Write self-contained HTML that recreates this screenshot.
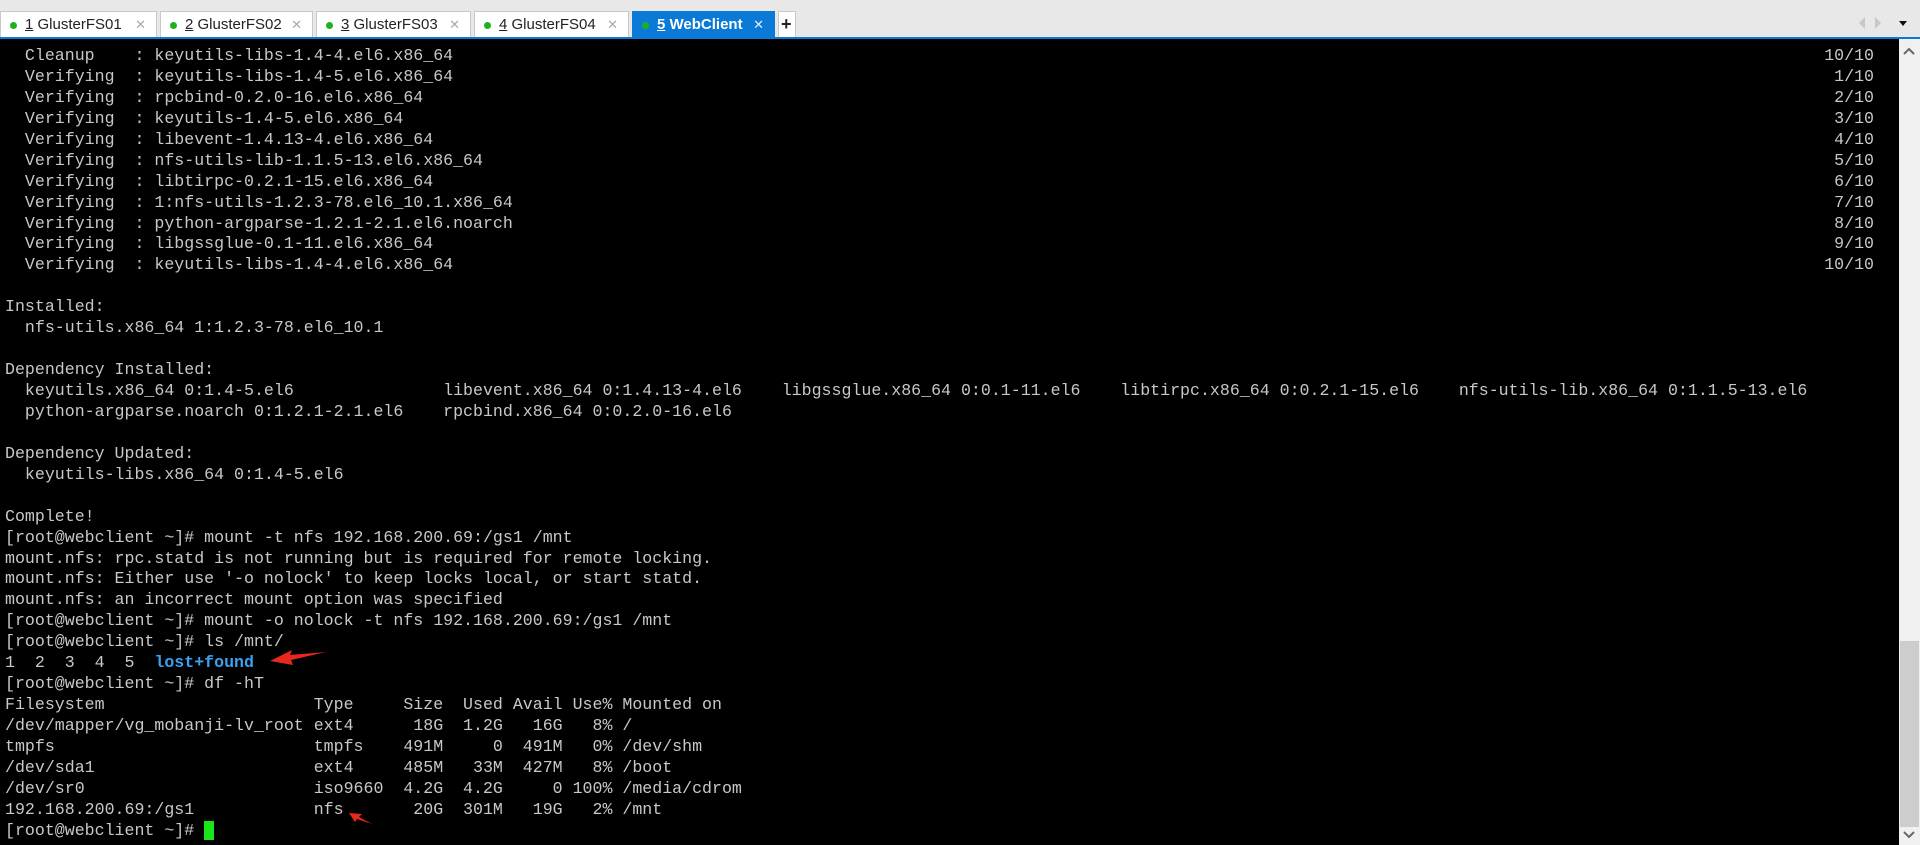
<!DOCTYPE html>
<html><head><meta charset="utf-8"><style>
html,body{margin:0;padding:0;width:1920px;height:845px;overflow:hidden;background:#000;}
#bar{position:absolute;left:0;top:0;width:1920px;height:37px;background:#e8e8e8;}
.tab{position:absolute;top:11px;height:26px;background:#fff;border:1px solid #c8c8c8;border-bottom:none;box-sizing:border-box;font-family:"Liberation Sans",sans-serif;font-size:15px;line-height:25px;color:#222;}
.tab .dot{position:absolute;left:9px;top:10px;width:7px;height:7px;border-radius:50%;background:#1db21d;}
.tab .t{position:absolute;left:24px;}
.tab .x{position:absolute;right:10px;color:#aaa;font-size:13px;}
.tab.act{background:#0a7ad6;border-color:#0a7ad6;color:#fff;font-weight:bold;}
.tab.act .x{color:#e0eefa;font-weight:normal;}
#blue{position:absolute;left:0;top:37px;width:1920px;height:2px;background:#0a7ad6;}
#term{position:absolute;left:5px;top:46px;margin:0;font-family:"Liberation Mono",monospace;font-size:16.6px;line-height:20.94px;color:#c8c8c8;white-space:pre;}
#sb{position:absolute;left:1899px;top:39px;width:21px;height:806px;background:#f0f0f0;}
#thumb{position:absolute;left:1900px;top:641px;width:19px;height:186px;background:#cdcdcd;}
.b{color:#3aa0f0;font-weight:bold;}
</style></head><body>
<div id="bar">
<div class="tab" style="left:0;width:157px"><span class="dot"></span><span class="t"><u>1</u> GlusterFS01</span><span class="x">✕</span></div>
<div class="tab" style="left:160px;width:153px"><span class="dot"></span><span class="t"><u>2</u> GlusterFS02</span><span class="x">✕</span></div>
<div class="tab" style="left:316px;width:155px"><span class="dot"></span><span class="t"><u>3</u> GlusterFS03</span><span class="x">✕</span></div>
<div class="tab" style="left:474px;width:155px"><span class="dot"></span><span class="t"><u>4</u> GlusterFS04</span><span class="x">✕</span></div>
<div class="tab act" style="left:632px;width:143px"><span class="dot"></span><span class="t"><u>5</u> WebClient</span><span class="x">✕</span></div>
<div class="tab" style="left:778px;width:18px;font-weight:bold;font-size:18px;text-align:center;line-height:24px"><span style="position:absolute;left:2px">+</span></div>
<svg style="position:absolute;left:1855px;top:16px" width="60" height="14"><path d="M10 1 L4 7 L10 13Z" fill="#c8c8c8"/><path d="M20 1 L26 7 L20 13Z" fill="#c8c8c8"/><path d="M44 5 L52 5 L48 10Z" fill="#111"/></svg>
</div>
<div id="blue"></div>
<pre id="term">  Cleanup    : keyutils-libs-1.4-4.el6.x86_64
  Verifying  : keyutils-libs-1.4-5.el6.x86_64
  Verifying  : rpcbind-0.2.0-16.el6.x86_64
  Verifying  : keyutils-1.4-5.el6.x86_64
  Verifying  : libevent-1.4.13-4.el6.x86_64
  Verifying  : nfs-utils-lib-1.1.5-13.el6.x86_64
  Verifying  : libtirpc-0.2.1-15.el6.x86_64
  Verifying  : 1:nfs-utils-1.2.3-78.el6_10.1.x86_64
  Verifying  : python-argparse-1.2.1-2.1.el6.noarch
  Verifying  : libgssglue-0.1-11.el6.x86_64
  Verifying  : keyutils-libs-1.4-4.el6.x86_64

Installed:
  nfs-utils.x86_64 1:1.2.3-78.el6_10.1

Dependency Installed:
  keyutils.x86_64 0:1.4-5.el6               libevent.x86_64 0:1.4.13-4.el6    libgssglue.x86_64 0:0.1-11.el6    libtirpc.x86_64 0:0.2.1-15.el6    nfs-utils-lib.x86_64 0:1.1.5-13.el6
  python-argparse.noarch 0:1.2.1-2.1.el6    rpcbind.x86_64 0:0.2.0-16.el6

Dependency Updated:
  keyutils-libs.x86_64 0:1.4-5.el6

Complete!
[root@webclient ~]# mount -t nfs 192.168.200.69:/gs1 /mnt
mount.nfs: rpc.statd is not running but is required for remote locking.
mount.nfs: Either use '-o nolock' to keep locks local, or start statd.
mount.nfs: an incorrect mount option was specified
[root@webclient ~]# mount -o nolock -t nfs 192.168.200.69:/gs1 /mnt
[root@webclient ~]# ls /mnt/
1  2  3  4  5  <span class="b">lost+found</span>
[root@webclient ~]# df -hT
Filesystem                     Type     Size  Used Avail Use% Mounted on
/dev/mapper/vg_mobanji-lv_root ext4      18G  1.2G   16G   8% /
tmpfs                          tmpfs    491M     0  491M   0% /dev/shm
/dev/sda1                      ext4     485M   33M  427M   8% /boot
/dev/sr0                       iso9660  4.2G  4.2G     0 100% /media/cdrom
192.168.200.69:/gs1            nfs       20G  301M   19G   2% /mnt
[root@webclient ~]# <span style="background:#19e619;color:#19e619"> </span></pre>
<pre style="position:absolute;left:0;top:46px;margin:0;width:1874px;text-align:right;font-family:'Liberation Mono',monospace;font-size:16.6px;line-height:20.94px;color:#c8c8c8;">10/10
1/10
2/10
3/10
4/10
5/10
6/10
7/10
8/10
9/10
10/10</pre>
<div id="sb"></div>
<div id="thumb"></div>
<svg style="position:absolute;left:1899px;top:44px" width="21" height="14"><path d="M5 10 L10 5 L15 10" stroke="#666" stroke-width="2" fill="none"/></svg>
<svg style="position:absolute;left:1899px;top:828px" width="21" height="14"><path d="M5 4 L10 9 L15 4" stroke="#666" stroke-width="2" fill="none"/></svg>
<svg style="position:absolute;left:0;top:0" width="1920" height="845">
<path d="M270 661 L292 650 L290 655 L326 652 L291 660 L293 665Z" fill="#e8281e"/>
<path d="M349 813 L362 814 L359 817 L372 824 L357 819 L355 822Z" fill="#e8281e"/>
</svg>
</body></html>
